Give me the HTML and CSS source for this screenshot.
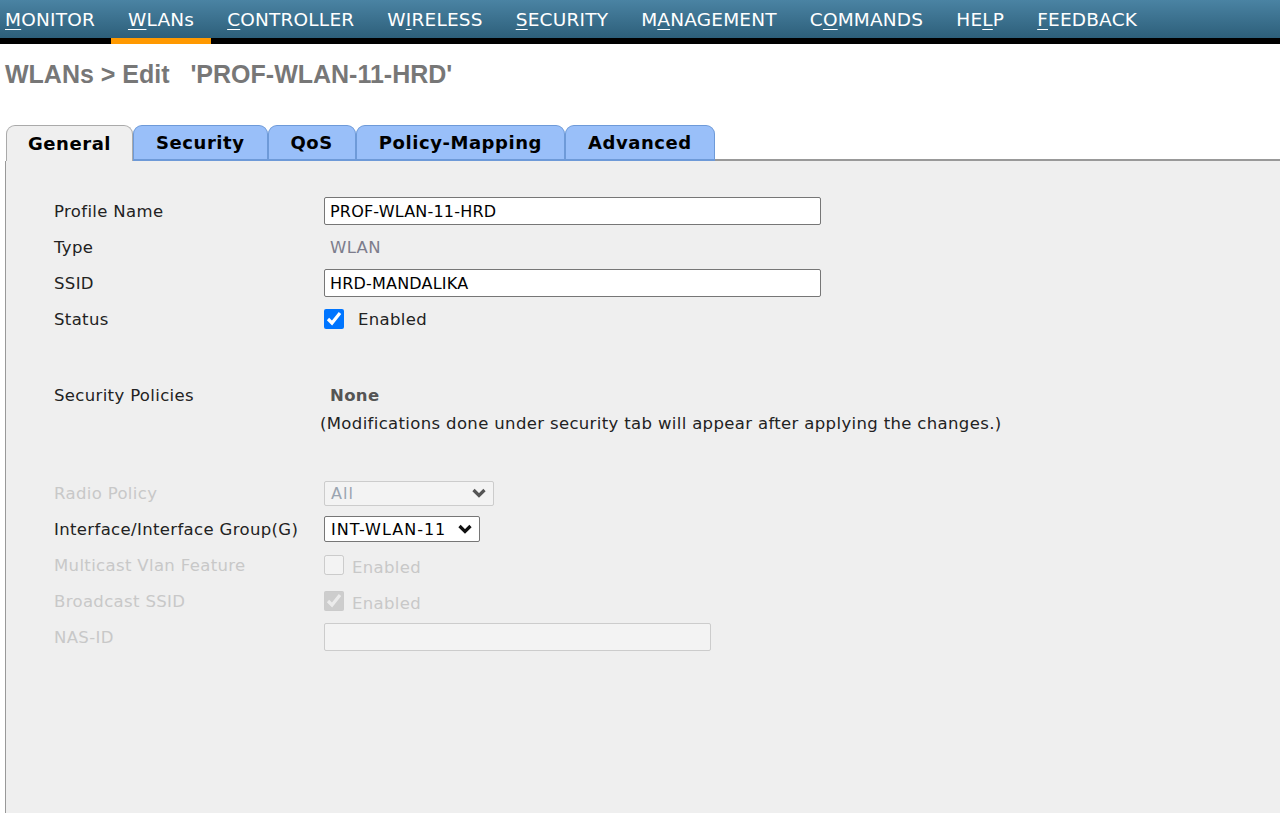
FILE: index.html
```html
<!DOCTYPE html>
<html lang="en">
<head>
    <meta charset="UTF-8">
    <title>WLANs &gt; Edit</title>
    <link rel="stylesheet" href="styles.css">
</head>
<body>

<!-- Top menu -->
<nav class="topnav">
    <a class="nav-link first"><u>M</u>ONITOR</a>
    <a class="nav-link active"><u>W</u>LANs</a>
    <a class="nav-link"><u>C</u>ONTROLLER</a>
    <a class="nav-link">W<u>I</u>RELESS</a>
    <a class="nav-link"><u>S</u>ECURITY</a>
    <a class="nav-link">M<u>A</u>NAGEMENT</a>
    <a class="nav-link">C<u>O</u>MMANDS</a>
    <a class="nav-link">HE<u>L</u>P</a>
    <a class="nav-link"><u>F</u>EEDBACK</a>
</nav>

<h1 class="page-title">WLANs &gt; Edit &nbsp;&nbsp;'PROF-WLAN-11-HRD'</h1>

<!-- Tabs -->
<div class="tabs">
    <div class="tab active">General</div>
    <div class="tab">Security</div>
    <div class="tab">QoS</div>
    <div class="tab">Policy-Mapping</div>
    <div class="tab">Advanced</div>
    <div class="tab-rest"></div>
</div>

<div class="panel">
    <div class="row">
        <div class="label">Profile Name</div>
        <div class="value"><input type="text" class="text-input wide" value="PROF-WLAN-11-HRD"></div>
    </div>
    <div class="row">
        <div class="label">Type</div>
        <div class="value plain grey">WLAN</div>
    </div>
    <div class="row">
        <div class="label">SSID</div>
        <div class="value"><input type="text" class="text-input wide" value="HRD-MANDALIKA"></div>
    </div>
    <div class="row">
        <div class="label">Status</div>
        <div class="value">
            <input type="checkbox" class="check" checked>
            <span class="check-text">Enabled</span>
        </div>
    </div>

    <div class="row section">
        <div class="label">Security Policies</div>
        <div class="value plain strong">None</div>
    </div>
    <div class="note-row">(Modifications done under security tab will appear after applying the changes.)</div>

    <div class="row section disabled">
        <div class="label">Radio Policy</div>
        <div class="value">
            <div class="select radio">
                <span>All</span>
                <svg class="chevron" width="16" height="10" viewBox="0 0 16 10"><path d="M2.5 2 L8 7.5 L13.5 2" fill="none" stroke="currentColor" stroke-width="3.2"/></svg>
            </div>
        </div>
    </div>
    <div class="row">
        <div class="label">Interface/Interface Group(G)</div>
        <div class="value">
            <div class="select iface">
                <span>INT-WLAN-11</span>
                <svg class="chevron" width="16" height="10" viewBox="0 0 16 10"><path d="M2.5 2 L8 7.5 L13.5 2" fill="none" stroke="currentColor" stroke-width="3.2"/></svg>
            </div>
        </div>
    </div>
    <div class="row disabled">
        <div class="label">Multicast Vlan Feature</div>
        <div class="value">
            <input type="checkbox" class="check" disabled>
            <span class="check-text near">Enabled</span>
        </div>
    </div>
    <div class="row disabled">
        <div class="label">Broadcast SSID</div>
        <div class="value">
            <input type="checkbox" class="check" checked disabled>
            <span class="check-text near">Enabled</span>
        </div>
    </div>
    <div class="row disabled">
        <div class="label">NAS-ID</div>
        <div class="value"><input type="text" class="text-input nas" disabled></div>
    </div>
</div>

</body>
</html>
```

FILE: styles.css
```css
body {
    margin: 0;
    background-color: #ffffff;
    font-family: "DejaVu Sans", Verdana, sans-serif;
}

/* Top menu bar */
.topnav {
    display: flex;
    height: 38px;
    padding-left: 5px;
    background: linear-gradient(#4a83a3, #2d5f7a);
    border-bottom: 6px solid #000000;
}

.nav-link {
    display: flex;
    align-items: center;
    padding: 0 16.5px;
    font-size: 18.5px;
    letter-spacing: 0.2px;
    color: #ffffff;
    cursor: pointer;
}

.nav-link.first {
    padding-left: 0;
}

.nav-link.active {
    margin-bottom: -6px;
    border-bottom: 6px solid #ff9900;
}

.nav-link u {
    text-underline-offset: 3px;
}

/* Page heading */
.page-title {
    margin: 15px 0 0 5px;
    font-family: "Liberation Sans", Arial, sans-serif;
    font-size: 25px;
    line-height: 30px;
    font-weight: bold;
    color: #777777;
    white-space: pre;
}

/* Tab strip */
.tabs {
    display: flex;
    align-items: flex-end;
    margin-top: 36px;
    padding-left: 6px;
    height: 36px;
}

.tab {
    height: 33px;
    line-height: 33px;
    padding: 0 22px;
    font-size: 18px;
    font-weight: bold;
    letter-spacing: 0.55px;
    color: #000000;
    background-color: #99bff9;
    border: 1px solid #6e9ad8;
    border-bottom-width: 2px;
    border-radius: 9px 9px 0 0;
    cursor: pointer;
}

.tab.active {
    height: 35px;
    line-height: 36px;
    padding: 0 21px;
    background-color: #efefef;
    border-color: #aaaaaa;
    border-bottom: none;
}

.tab-rest {
    flex-grow: 1;
    border-bottom: 2px solid #999999;
}

/* Content panel */
.panel {
    margin-left: 5px;
    min-height: 660px;
    padding: 32px 0 0 48px;
    background-color: #efefef;
    border-left: 1px solid #999999;
    font-size: 16.5px;
    letter-spacing: 0.35px;
    color: #222222;
}

.row {
    display: flex;
    align-items: center;
    height: 36px;
}

.row.section {
    margin-top: 40px;
}

.label {
    width: 270px;
    flex-shrink: 0;
}

.value {
    display: flex;
    align-items: center;
}

.value.plain {
    padding-left: 6px;
}

.grey {
    color: #7d7d8c;
}

.strong {
    font-weight: bold;
    color: #555555;
}

.note-row {
    height: 22px;
    line-height: 22px;
    padding-left: 266px;
}

.disabled .label,
.disabled .check-text {
    color: #c8c8c8;
}

/* Form controls */
.text-input {
    box-sizing: border-box;
    height: 28px;
    padding: 0 5px;
    font-family: "DejaVu Sans", Verdana, sans-serif;
    font-size: 16px;
    letter-spacing: 0.2px;
    color: #000000;
    background-color: #ffffff;
    border: 1px solid #767676;
    border-radius: 2px;
}

.text-input.wide {
    width: 497px;
}

.text-input.nas {
    width: 387px;
    background-color: #f3f3f3;
    border-color: #cccccc;
}

.check {
    width: 20px;
    height: 20px;
    margin: 0;
    accent-color: #0075ff;
}

.check-text {
    margin-left: 14px;
}

.check-text.near {
    margin-left: 8px;
    margin-top: 4px;
}

.select {
    position: relative;
    box-sizing: border-box;
    display: flex;
    align-items: center;
    padding-left: 6px;
    font-size: 16px;
    letter-spacing: 1px;
    border-radius: 2px;
}

.select.radio {
    width: 170px;
    height: 25px;
    color: #9aa4b0;
    background-color: #f3f3f3;
    border: 1px solid #cccccc;
}

.select.radio .chevron {
    color: #555555;
}

.select.iface {
    width: 156px;
    height: 26px;
    color: #000000;
    background-color: #ffffff;
    border: 1px solid #767676;
}

.chevron {
    position: absolute;
    right: 6px;
    top: 50%;
    margin-top: -5px;
    color: #111111;
}
```
